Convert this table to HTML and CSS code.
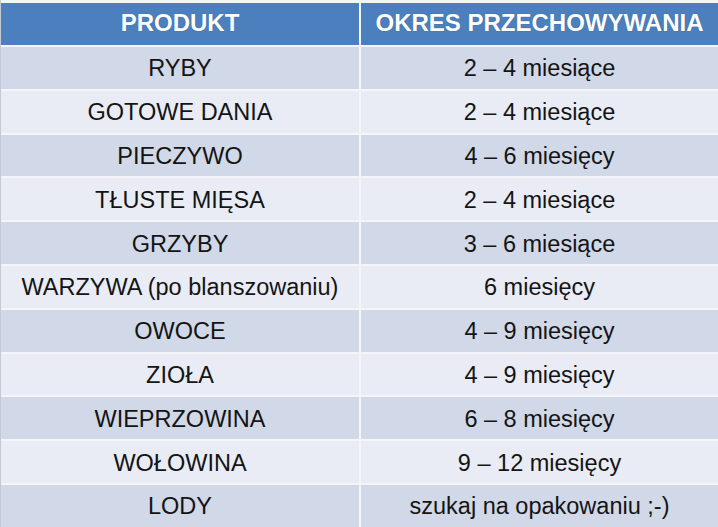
FILE: index.html
```html
<!DOCTYPE html>
<html lang="pl">
<head>
<meta charset="utf-8">
<link rel="stylesheet" href="styles.css">
</head>
<body>
<div class="table">
  <div class="row head"><div class="cell">PRODUKT</div><div class="cell">OKRES PRZECHOWYWANIA</div></div>
  <div class="row odd"><div class="cell">RYBY</div><div class="cell">2 – 4 miesiące</div></div>
  <div class="row even"><div class="cell">GOTOWE DANIA</div><div class="cell">2 – 4 miesiące</div></div>
  <div class="row odd"><div class="cell">PIECZYWO</div><div class="cell">4 – 6 miesięcy</div></div>
  <div class="row even"><div class="cell">TŁUSTE MIĘSA</div><div class="cell">2 – 4 miesiące</div></div>
  <div class="row odd"><div class="cell">GRZYBY</div><div class="cell">3 – 6 miesiące</div></div>
  <div class="row even"><div class="cell">WARZYWA (po blanszowaniu)</div><div class="cell">6 miesięcy</div></div>
  <div class="row odd"><div class="cell">OWOCE</div><div class="cell">4 – 9 miesięcy</div></div>
  <div class="row even"><div class="cell">ZIOŁA</div><div class="cell">4 – 9 miesięcy</div></div>
  <div class="row odd"><div class="cell">WIEPRZOWINA</div><div class="cell">6 – 8 miesięcy</div></div>
  <div class="row even"><div class="cell">WOŁOWINA</div><div class="cell">9 – 12 miesięcy</div></div>
  <div class="row odd"><div class="cell">LODY</div><div class="cell">szukaj na opakowaniu ;-)</div></div>
</div>
</body>
</html>
```
FILE: styles.css
```css
html, body {
  margin: 0;
  padding: 0;
  background: #f3f5f9;
}
body {
  width: 718px;
  height: 527px;
  overflow: hidden;
  font-family: "Liberation Sans", Arial, sans-serif;
}
.table {
  display: flex;
  flex-direction: column;
  gap: 2px;
  padding-top: 3px;
  border-left: 1px solid #c3cad6;
}
.row {
  display: grid;
  grid-template-columns: 358px 357px;
  column-gap: 2px;
  height: 41.8px;
}
.row.head {
  height: 42px;
}
.cell {
  display: flex;
  align-items: center;
  justify-content: center;
  font-size: 23.5px;
  color: #141414;
  white-space: nowrap;
  padding-top: 2px;
}
.head .cell {
  background: #4b7fbd;
  color: #ffffff;
  font-weight: bold;
  font-size: 24px;
  padding-top: 0;
  padding-bottom: 3px;
  text-shadow: 0 0 1px rgba(40, 70, 120, 0.6);
}
.odd .cell {
  background: #d1d8e7;
}
.even .cell {
  background: #e9ecf4;
}
```
